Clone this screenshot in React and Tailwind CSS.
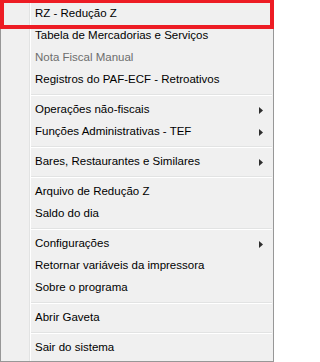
import React from "react";

const items = [
  { label: "RZ - Redução Z" },
  { label: "Tabela de Mercadorias e Serviços" },
  { label: "Nota Fiscal Manual", disabled: true },
  { label: "Registros do PAF-ECF - Retroativos" },
  { sep: true },
  { label: "Operações não-fiscais", sub: true },
  { label: "Funções Administrativas - TEF", sub: true },
  { sep: true },
  { label: "Bares, Restaurantes e Similares", sub: true },
  { sep: true },
  { label: "Arquivo de Redução Z" },
  { label: "Saldo do dia" },
  { sep: true },
  { label: "Configurações", sub: true },
  { label: "Retornar variáveis da impressora" },
  { label: "Sobre o programa" },
  { sep: true },
  { label: "Abrir Gaveta" },
  { sep: true },
  { label: "Sair do sistema" },
];

function Arrow() {
  return (
    <svg width="4" height="7" viewBox="0 0 4 7" className="mr-[10px]">
      <path d="M0 0 L4 3.5 L0 7 Z" fill="#2e2e2e" />
    </svg>
  );
}

export default function App() {
  return (
    <div className="relative w-[274px] h-[362px] bg-[#f0f0f0] border border-[#979797] font-['Liberation_Sans',Arial,sans-serif] text-[11.5px] text-black">
      <div className="relative flex flex-col py-[2px] h-full">
        <div className="absolute left-[28px] top-0 bottom-0 w-[2px] flex">
          <div className="w-px bg-[#e2e3e3]" />
          <div className="w-px bg-white" />
        </div>
        {items.map((it, i) =>
          it.sep ? (
            <div key={i} className="h-[8px] flex flex-col justify-center pl-[29px] pr-[1px]">
              <div className="h-px bg-[#e2e3e3]" />
              <div className="h-px bg-white" />
            </div>
          ) : (
            <div
              key={i}
              className={`h-[22px] flex items-center justify-between pl-[34px] ${
                it.disabled ? "text-[#6d6d6d]" : "text-black"
              }`}
            >
              <span className="leading-none">{it.label}</span>
              {it.sub && <Arrow />}
            </div>
          )
        )}
      </div>
      <div className="absolute -left-px -top-[2px] w-[274px] h-[30px] border-4 border-[#ed1c24]" />
    </div>
  );
}
